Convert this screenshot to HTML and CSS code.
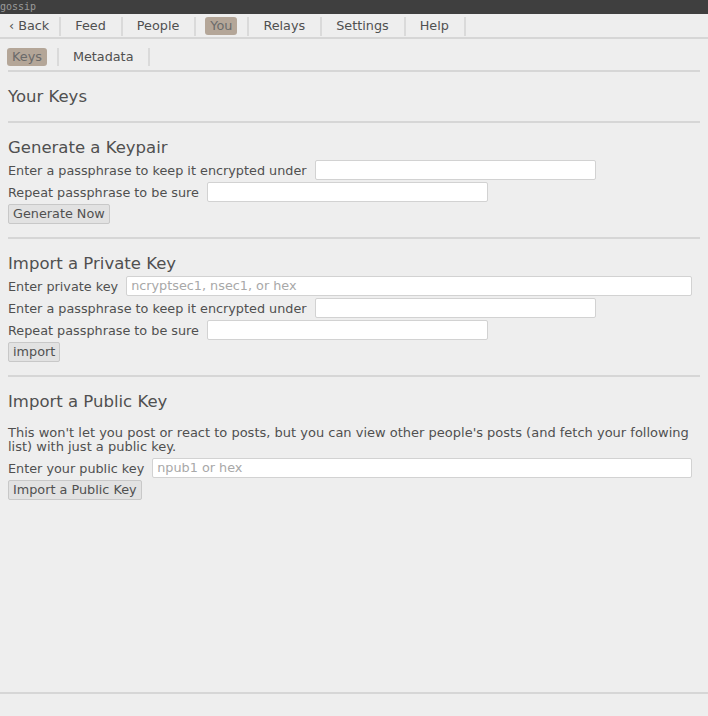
FILE: index.html
```html
<!DOCTYPE html>
<html>
<head>
<meta charset="utf-8">
<link rel="stylesheet" href="styles.css">
</head>
<body>
<div class="titlebar">gossip</div>
<nav class="topnav">
  <span class="tab back">‹ Back</span><span class="sep"></span>
  <span class="tab">Feed</span><span class="sep"></span>
  <span class="tab">People</span><span class="sep"></span>
  <span class="tab sel">You</span><span class="sep"></span>
  <span class="tab">Relays</span><span class="sep"></span>
  <span class="tab">Settings</span><span class="sep"></span>
  <span class="tab">Help</span><span class="sep"></span>
</nav>
<main class="content">
  <nav class="subnav">
    <span class="tab sel">Keys</span><span class="sep"></span>
    <span class="tab">Metadata</span><span class="sep"></span>
  </nav>
  <hr class="rule">
  <h2 class="h first">Your Keys</h2>
  <hr class="rule">
  <section class="sec">
    <h2 class="h">Generate a Keypair</h2>
    <div class="row"><span>Enter a passphrase to keep it encrypted under</span><span class="input"></span></div>
    <div class="row"><span>Repeat passphrase to be sure</span><span class="input"></span></div>
    <div class="row"><span class="btn">Generate Now</span></div>
  </section>
  <hr class="rule">
  <section class="sec">
    <h2 class="h">Import a Private Key</h2>
    <div class="row"><span>Enter private key</span><span class="input wide hint">ncryptsec1, nsec1, or hex</span></div>
    <div class="row"><span>Enter a passphrase to keep it encrypted under</span><span class="input"></span></div>
    <div class="row"><span>Repeat passphrase to be sure</span><span class="input"></span></div>
    <div class="row"><span class="btn">import</span></div>
  </section>
  <hr class="rule">
  <section class="sec">
    <h2 class="h">Import a Public Key</h2>
    <p class="para">This won't let you post or react to posts, but you can view other people's posts (and fetch your following list) with just a public key.</p>
    <div class="row"><span>Enter your public key</span><span class="input wide hint">npub1 or hex</span></div>
    <div class="row"><span class="btn">Import a Public Key</span></div>
  </section>
</main>
<div class="bottom"></div>
</body>
</html>
```
FILE: styles.css
```css
html, body {
  margin: 0;
  padding: 0;
  background: #eeeeee;
  width: 708px;
  height: 716px;
  overflow: hidden;
}
body {
  font-family: "DejaVu Sans", sans-serif;
  font-size: 12.8px;
  color: #505050;
  display: flex;
  flex-direction: column;
}
.titlebar {
  height: 14px;
  background: #3f3f3f;
  color: #9a9a9a;
  font-family: "DejaVu Sans Mono", monospace;
  font-size: 10px;
  line-height: 14px;
}
.topnav {
  display: flex;
  align-items: center;
  height: 22px;
  padding-top: 1px;
  padding-left: 9px;
  border-bottom: 2px solid #d6d6d6;
  font-size: 12.8px;
}
.tab {
  padding: 0 5px;
  margin: 0 -5px;
  border-radius: 3px;
  line-height: 18px;
}
.tab.back { margin-right: -10px; }
.tab.sel {
  background: #b4a698;
  color: #6a6a6a;
}
.sep {
  width: 2px;
  height: 19px;
  background: #dadada;
  margin: 0 15px;
}
.topnav .sep { margin: 0 14px 0 15px; }
.content {
  flex: 1;
  padding: 0 8px;
}
.subnav {
  display: flex;
  align-items: center;
  height: 23px;
  margin-top: 6px;
  padding-left: 4px;
  font-size: 12.8px;
}
.subnav .sep { height: 18px; margin: 0 14px 0 15px; }
.rule {
  border: 0;
  height: 2px;
  background: #d6d6d6;
  margin: 2px 0 0 0;
}
.sec + .rule,
.h.first + .rule { margin-top: 0; }
.h {
  font-size: 16.5px;
  font-weight: normal;
  margin: 0;
  line-height: 20px;
}
.h.first {
  margin: 15px 0 14px;
}
.sec {
  padding-top: 15px;
  padding-bottom: 13px;
}
.row {
  display: flex;
  align-items: center;
  gap: 8px;
  height: 20px;
  margin-top: 2px;
}
.input {
  width: 275px;
  height: 18px;
  background: #ffffff;
  border: 1px solid #d2d2d2;
  border-radius: 2px;
  line-height: 18px;
  padding: 0 0 0 4px;
}
.input.wide {
  flex: 1;
  margin-right: 8px;
}
.hint { color: #a8a8a8; }
.btn {
  border: 1px solid #c8c8c8;
  background: #e2e2e2;
  border-radius: 2px;
  padding: 0 4px;
  height: 18px;
  line-height: 18px;
}
.para {
  margin: 14px 0 4px;
  line-height: 14px;
  font-size: 13px;
}
.bottom {
  height: 2px;
  background: #d6d6d6;
  margin-bottom: 22px;
}
```
